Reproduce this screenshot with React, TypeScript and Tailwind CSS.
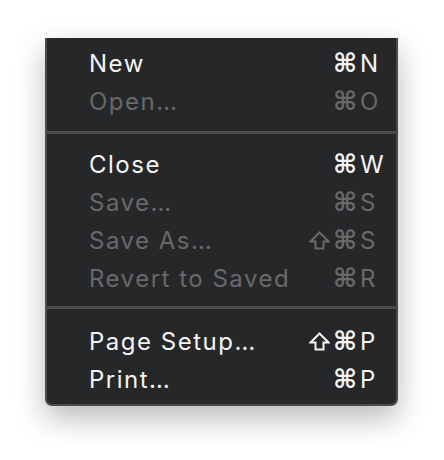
type Item = { label: string; shift?: boolean; keyChar: string; enabled: boolean };

const groups: Item[][] = [
  [
    { label: "New", keyChar: "N", enabled: true },
    { label: "Open…", keyChar: "O", enabled: false },
  ],
  [
    { label: "Close", keyChar: "W", enabled: true },
    { label: "Save…", keyChar: "S", enabled: false },
    { label: "Save As…", shift: true, keyChar: "S", enabled: false },
    { label: "Revert to Saved", keyChar: "R", enabled: false },
  ],
  [
    { label: "Page Setup…", shift: true, keyChar: "P", enabled: true },
    { label: "Print…", keyChar: "P", enabled: true },
  ],
];

function ShiftIcon() {
  return (
    <svg width="21" height="19" viewBox="0 0 21 19" className="mr-[3px]">
      <path
        d="M10.5 1.5 L19.5 10.5 H14.5 V17.5 H6.5 V10.5 H1.5 Z"
        fill="none"
        stroke="currentColor"
        strokeWidth="2"
        strokeLinejoin="miter"
      />
    </svg>
  );
}

function MenuRow({ item }: { item: Item }) {
  const color = item.enabled ? "text-[#f4f4f4]" : "text-[#69696b]";
  return (
    <div className={`flex h-[38px] items-center pl-[42px] pr-[9px] ${color}`}>
      <span className="flex-1 pt-[1px] font-['Inter',sans-serif] text-[24px] leading-none tracking-[1.5px]">{item.label}</span>
      {item.shift && <ShiftIcon />}
      <span className="font-['DejaVu_Sans',sans-serif] text-[26px] font-bold leading-none">⌘</span>
      <span className="ml-[3px] w-[27px] pt-[1px] font-['Inter',sans-serif] text-[24px] leading-none tracking-[0.5px]">{item.keyChar}</span>
    </div>
  );
}

export default function App() {
  return (
    <div className="h-[460px] w-[444px] bg-white pl-[45px] pt-[38px]">
      <div className="w-[353px] rounded-b-[7px] border-x-2 border-b-2 border-[#4b4b4d] bg-[#262729] pt-[6px] pb-[6px] shadow-[0_12px_30px_rgba(0,0,0,0.28)]">
        {groups.map((group, gi) => (
          <div key={gi}>
            {gi === 1 && <div className="mt-[11px] mb-[11px] h-[3px] bg-[#4a4b4d]" />}
            {gi === 2 && <div className="mt-[9px] mb-[13px] h-[3px] bg-[#4a4b4d]" />}
            {group.map((item) => (
              <MenuRow key={item.label} item={item} />
            ))}
          </div>
        ))}
      </div>
    </div>
  );
}
